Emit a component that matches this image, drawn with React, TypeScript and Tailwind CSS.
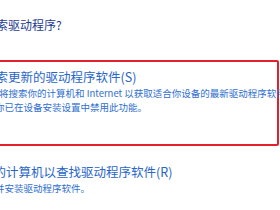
export default function App() {
  const cjk = { fontFamily: '"Noto Sans CJK SC", "Noto Sans", sans-serif' };

  return (
    <div className="w-[280px] h-[210px] overflow-hidden bg-white" style={cjk}>
      {/* heading */}
      <div className="pt-[17px] text-[12px] leading-[16px] text-[#1f3c8f] whitespace-nowrap">
        <span className="inline-block -ml-[4px]">索驱动程序?</span>
      </div>

      {/* option 1, outlined in red */}
      <div className="mt-[27px] -ml-[10px] w-[289px] pl-[8px] pt-[7px] pb-[30px] border-2 border-[#e3202b] rounded-[2px]">
        <div className="text-[12.5px] leading-[16px] text-[#2866c8] whitespace-nowrap">
          <span className="inline-block -ml-[4.5px]">索更新的驱动程序软件(S)</span>
        </div>
        <div className="mt-[1px] text-[9.5px] leading-[14px] text-[#2f6fd0] whitespace-nowrap">
          <div className="-ml-[1px]">将搜索你的计算机和 Internet 以获取适合你设备的最新驱动程序软件，除非你</div>
          <div className="-ml-[5px]">你已在设备安装设置中禁用此功能。</div>
        </div>
      </div>

      {/* option 2 */}
      <div className="mt-[18px]">
        <div className="text-[12.5px] leading-[16px] text-[#2866c8] whitespace-nowrap">
          <span className="inline-block -ml-[6.5px]">的计算机以查找驱动程序软件(R)</span>
        </div>
        <div className="mt-[1px] text-[9.5px] leading-[14px] text-[#2f6fd0] whitespace-nowrap">
          <div className="-ml-[5px]">并安装驱动程序软件。</div>
        </div>
      </div>
    </div>
  );
}
